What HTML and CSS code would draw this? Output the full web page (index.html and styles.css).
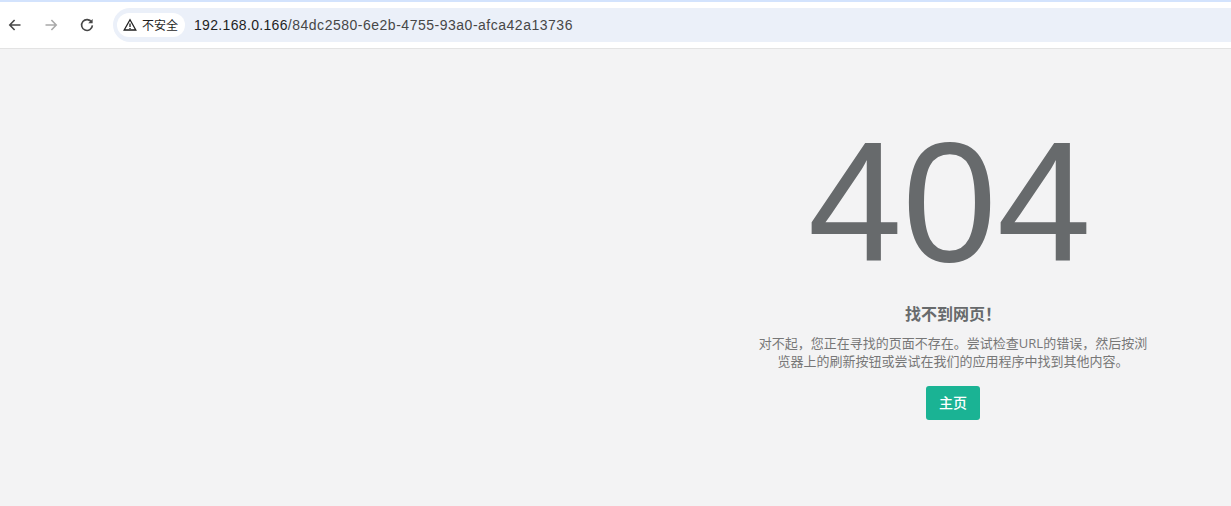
FILE: index.html
```html
<!DOCTYPE html>
<html lang="zh-CN">
<head>
<meta charset="utf-8">
<title>404</title>
<link rel="stylesheet" href="styles.css">
</head>
<body>
<header class="browser">
  <div class="strip"></div>
  <div class="toolbar">
    <nav class="nav">
      <svg class="icon" viewBox="0 0 16 16"><path class="dark" d="M13.5 8H3M7.6 3 2.8 8l4.8 5"/></svg>
      <svg class="icon" viewBox="0 0 16 16"><path class="faint" d="M2.5 8H13M8.4 3l4.8 5-4.8 5"/></svg>
      <svg class="icon" viewBox="0 0 16 16"><path class="dark" d="M12.6 5.2A5.4 5.4 0 1 0 13.4 8.4"/><path class="solid" d="M13.6 1.9v4.4H9.2z"/></svg>
    </nav>
    <div class="omnibox">
      <div class="chip">
        <svg class="warn" viewBox="0 0 14 14"><path class="warn-line" d="M7 1.8 1.2 12h11.6zM7 5.4v3.6M7 9.9v1"/></svg>
        <span>不安全</span>
      </div>
      <div class="url"><span class="host">192.168.0.166</span>/84dc2580-6e2b-4755-93a0-afca42a13736</div>
    </div>
  </div>
</header>
<main class="page">
  <section class="box">
    <h1 class="code">404</h1>
    <h3 class="title">找不到网页！</h3>
    <p class="message">对不起，您正在寻找的页面不存在。尝试检查URL的错误，然后按浏览器上的刷新按钮或尝试在我们的应用程序中找到其他内容。</p>
    <a class="home" href="#">主页</a>
  </section>
</main>
</body>
</html>
```
FILE: styles.css
```css
* { box-sizing: border-box; }
html, body { margin: 0; height: 100%; }
body {
  display: flex;
  flex-direction: column;
  height: 506px;
  overflow: hidden;
  background: #f3f3f4;
  font-family: "Open Sans", "Noto Sans CJK SC", sans-serif;
}
.browser { background: #fff; border-bottom: 1px solid #e3e3e3; height: 49px; flex: none; }
.strip { height: 2px; background: #d3e3fd; margin-bottom: 6px; }
.toolbar { display: flex; align-items: center; height: 34px; }
.nav { display: flex; width: 113px; padding-left: 7px; gap: 20px; }
.icon { width: 16px; height: 16px; }
.dark, .faint { fill: none; stroke-width: 1.6; }
.dark { stroke: #474747; }
.faint { stroke: #a9a9a9; }
.solid { fill: #474747; }
.omnibox {
  flex: 1;
  height: 34px;
  background: #ebf0f9;
  border-radius: 17px 0 0 17px;
  display: flex;
  align-items: center;
  padding-left: 4px;
}
.chip {
  display: flex;
  align-items: center;
  gap: 5px;
  height: 24px;
  width: 68px;
  padding-left: 6px;
  background: #fff;
  border-radius: 12px;
  font: 12px/24px "Noto Sans CJK SC", sans-serif;
  color: #1f1f1f;
  flex: none;
}
.warn { width: 14px; height: 14px; flex: none; }
.warn-line { fill: none; stroke: #1f1f1f; stroke-width: 1.3; }
.url {
  margin-left: 9px;
  font: 14px/24px "Liberation Sans", sans-serif;
  letter-spacing: 0.51px;
  color: #474747;
}
.host { color: #1f1f1f; letter-spacing: 0.33px; }
.page { flex: 1; display: flex; justify-content: flex-end; padding-right: 78px; }
.box { width: 400px; text-align: center; }
.code {
  margin: 68px 0 0 -7px;
  font-family: "Liberation Sans", sans-serif;
  font-size: 170px;
  font-weight: 400;
  line-height: 1;
  color: #676a6c;
}
.title {
  margin: 17px 0 0;
  font-size: 16px;
  line-height: 20px;
  font-weight: 700;
  color: #676a6c;
}
.message {
  margin: 10px 0 0;
  font-size: 13px;
  line-height: 18px;
  color: #777;
}
.home {
  display: inline-block;
  margin: 16px 0 0;
  width: 54px;
  height: 34px;
  background: #1ab394;
  border-radius: 3px;
  color: #fff;
  font-size: 14px;
  font-weight: 500;
  line-height: 34px;
  text-decoration: none;
}
```
